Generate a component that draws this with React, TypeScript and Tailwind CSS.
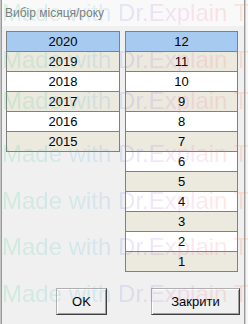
const years = ['2020', '2019', '2018', '2017', '2016', '2015'];
const months = ['12', '11', '10', '9', '8', '7', '6', '5', '4', '3', '2', '1'];

function rowBg(i: number) {
  if (i === 0) return 'bg-[#a6caf0]';
  return i % 2 === 1 ? 'bg-[#ece9df]' : 'bg-white';
}

function PickList({ items, width }: { items: string[]; width: string }) {
  return (
    <div className={`${width} border-t border-x border-[#808080] self-start`}>
      {items.map((item, i) => (
        <div
          key={item}
          className={`h-[20px] border-b border-[#808080] text-center text-[13px] leading-[19px] text-black ${rowBg(i)}`}
        >
          {item}
        </div>
      ))}
    </div>
  );
}

function DialogButton({ label, width }: { label: string; width: string }) {
  return (
    <button
      className={`${width} h-[27px] bg-[#f0f0f0] text-[13px] text-black border border-t-[#b0b0b0] border-l-[#b0b0b0] border-r-[#404040] border-b-[#404040] shadow-[inset_1px_1px_0_#ffffff,inset_-1px_-1px_0_#a0a0a0]`}
    >
      {label}
    </button>
  );
}

// watermark tops, measured from the screenshot
const marks = [4, 51, 92, 145, 192, 238, 285];

export default function App() {
  return (
    <div className="relative flex w-[248px] h-[324px] overflow-hidden bg-white font-['Liberation_Sans',Arial,sans-serif]">
      <div className="w-[1px] bg-[#c4c4c4]" />

      <div className="flex-1 flex flex-col border-x border-[#9a9a9a] bg-[#f0f0f0]">
        {/* Title */}
        <div className="h-[26px] bg-[#f9f9f9] pl-[3px] pt-[6px] text-[12px] leading-[14px] text-[#7c7c7c]">
          Вибір місяця/року
        </div>

        {/* Lists */}
        <div className="flex gap-[5px] pl-[4px] pt-[5px]">
          <PickList items={years} width="w-[114px]" />
          <PickList items={months} width="w-[113px]" />
        </div>

        {/* Buttons */}
        <div className="flex gap-[44px] pl-[54px] mt-[16px]">
          <DialogButton label="OK" width="w-[51px]" />
          <DialogButton label="Закрити" width="w-[89px]" />
        </div>
      </div>

      <div className="w-[3px] bg-[#f6f6f6] border-l border-[#d0d0d0]" />

      {/* Watermark */}
      <div className="pointer-events-none absolute inset-0">
        {marks.map((top) => (
          <div
            key={top}
            className="absolute left-[2px] whitespace-nowrap text-[24px] leading-[24px] font-['Liberation_Sans',Arial,sans-serif] bg-[linear-gradient(90deg,rgba(40,210,110,0.16)_0px,rgba(60,170,230,0.15)_95px,rgba(120,90,230,0.15)_135px,rgba(235,90,180,0.15)_185px,rgba(250,140,90,0.2)_240px)] bg-clip-text text-transparent"
            style={{ top: top - 3 }}
          >
            Made with Dr.Explain T
          </div>
        ))}
      </div>
    </div>
  );
}
